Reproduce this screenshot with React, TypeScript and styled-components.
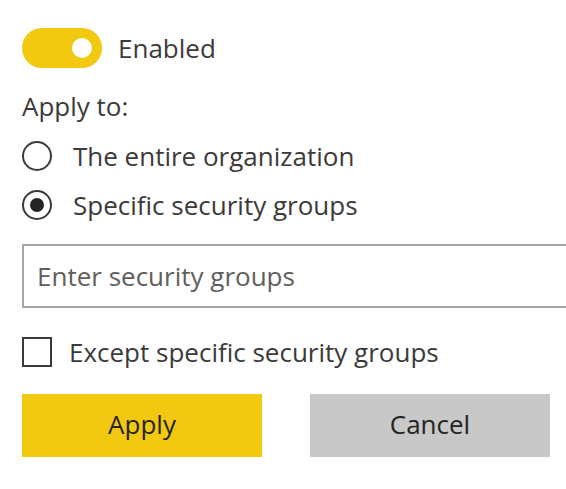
import React from "react";
import styled, { createGlobalStyle } from "styled-components";

const Global = createGlobalStyle`
  html, body { margin: 0; padding: 0; background: #fff; }
  body { font-family: "Open Sans", "Noto Sans", sans-serif; color: #3b3a39; }
`;

const Panel = styled.div`
  display: flex;
  flex-direction: column;
  padding: 28px 0 0 22px;
  width: 566px;
  box-sizing: border-box;
  overflow: hidden;
`;

const Row = styled.div<{ $mt?: number; $gap?: number }>`
  display: flex;
  align-items: center;
  gap: ${(p) => p.$gap ?? 21}px;
  margin-top: ${(p) => p.$mt ?? 0}px;
  height: 40px;
`;

const Label = styled.span`
  font-size: 26px;
  line-height: 40px;
  color: #3b3a39;
  white-space: nowrap;
`;

const Toggle = styled.div`
  width: 80px;
  height: 40px;
  border-radius: 20px;
  background: #f2c811;
  display: flex;
  align-items: center;
  justify-content: flex-end;
  padding-right: 10px;
  box-sizing: border-box;
`;

const Knob = styled.div`
  width: 20px;
  height: 20px;
  border-radius: 50%;
  background: #fff;
`;

const Heading = styled.div`
  font-size: 26px;
  line-height: 40px;
  margin-top: 18px;
`;

const Radio = styled.div<{ $checked?: boolean }>`
  width: 30px;
  height: 30px;
  border-radius: 50%;
  border: 2px solid #3b3a39;
  box-sizing: border-box;
  display: flex;
  align-items: center;
  justify-content: center;
  &::after {
    content: "";
    width: 14px;
    height: 14px;
    border-radius: 50%;
    background: #252423;
    display: ${(p) => (p.$checked ? "block" : "none")};
  }
`;

const Input = styled.div`
  margin-top: 19px;
  height: 64px;
  width: 560px;
  border: 2px solid #a6a6a6;
  box-sizing: border-box;
  display: flex;
  align-items: center;
  padding-left: 13px;
  font-size: 26px;
  color: #605e5c;
`;

const Checkbox = styled.div`
  width: 30px;
  height: 30px;
  border: 2px solid #3b3a39;
  box-sizing: border-box;
`;

const Buttons = styled.div`
  display: flex;
  gap: 48px;
  margin-top: 22px;
`;

const Button = styled.div<{ $primary?: boolean }>`
  width: 240px;
  height: 63px;
  padding-bottom: 4px;
  box-sizing: border-box;
  background: ${(p) => (p.$primary ? "#f2c811" : "#c8c8c8")};
  display: flex;
  align-items: center;
  justify-content: center;
  font-size: 26px;
  color: #252423;
`;

export default function App() {
  return (
    <>
      <Global />
      <Panel>
        <Row $gap={16}>
          <Toggle>
            <Knob />
          </Toggle>
          <Label>Enabled</Label>
        </Row>
        <Heading>Apply to:</Heading>
        <Row $mt={10}>
          <Radio />
          <Label>The entire organization</Label>
        </Row>
        <Row $mt={9}>
          <Radio $checked />
          <Label>Specific security groups</Label>
        </Row>
        <Input>Enter security groups</Input>
        <Row $mt={24} $gap={17}>
          <Checkbox />
          <Label>Except specific security groups</Label>
        </Row>
        <Buttons>
          <Button $primary>Apply</Button>
          <Button>Cancel</Button>
        </Buttons>
      </Panel>
    </>
  );
}
